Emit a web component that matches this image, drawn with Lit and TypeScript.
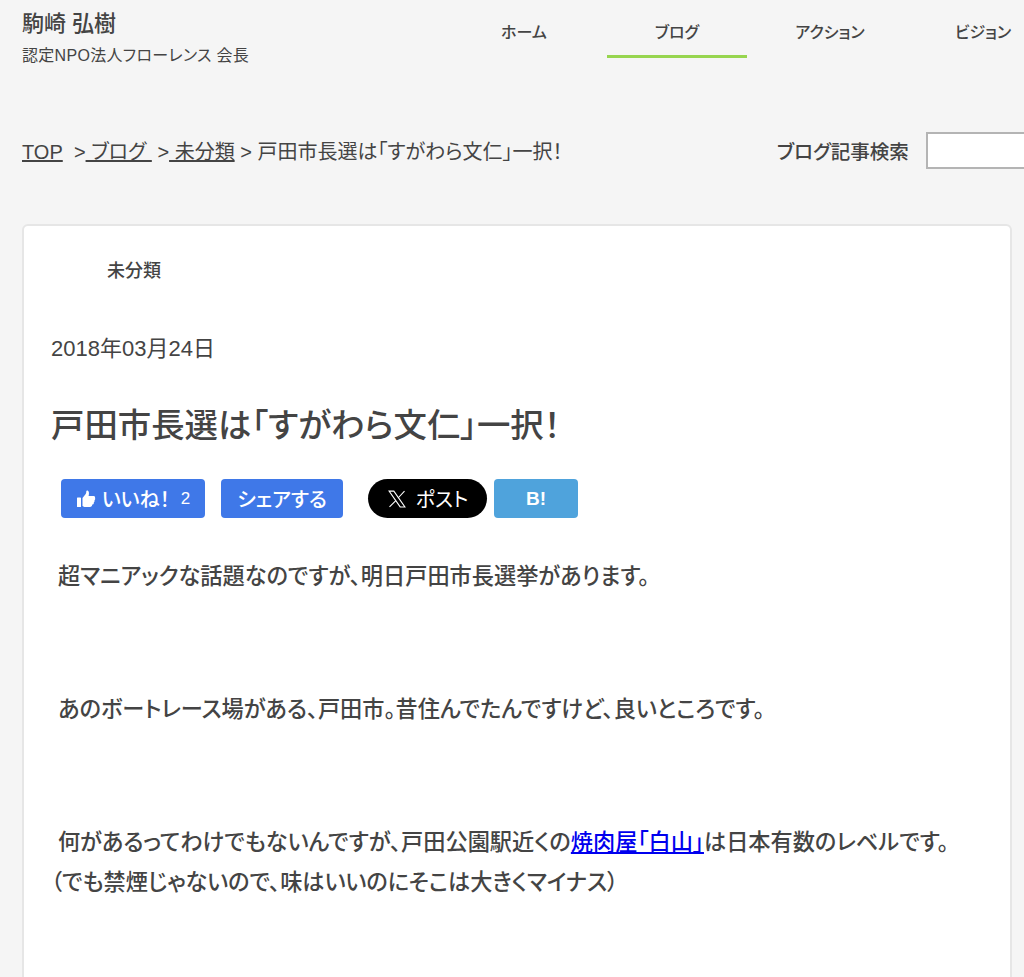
import { LitElement, html, css } from "lit";
import { customElement } from "lit/decorators.js";

@customElement("app-root")
export class AppRoot extends LitElement {
  static styles = css`
    :host {
      display: block;
      width: 1024px;
      height: 977px;
      overflow: hidden;
      background: #f5f5f5;
      color: #444;
      font-family: "Liberation Sans", "Noto Sans CJK JP", sans-serif;
      font-feature-settings: "palt";
    }
    a { color: inherit; }
    .header { display: flex; height: 58px; padding-left: 22px; }
    .brand { width: 432px; flex: none; }
    .name { font-size: 22px; font-weight: 500; line-height: 26px; margin-top: 11px; }
    .role { font-size: 16px; letter-spacing: 0.3px; line-height: 20px; margin-top: 9px; }
    .nav { display: flex; gap: 13px; flex: none; }
    .nav-item {
      width: 140px; height: 58px; box-sizing: border-box; padding-top: 23px;
      text-align: center; font-size: 16px; font-weight: 500; line-height: 20px;
    }
    .nav-item.active { border-bottom: 3px solid #97d54f; }
    .crumbs {
      display: flex; align-items: center; height: 40px; margin-top: 72px;
      padding-left: 22px; font-size: 20px; white-space: nowrap;
    }
    .path { width: 755px; flex: none; }
    .search { display: flex; align-items: center; gap: 17px; font-weight: 500; font-size: 19.5px; }
    .search-box {
      width: 140px; height: 37px; box-sizing: border-box; background: #fff;
      border: 2px solid #b4b4b4; flex: none;
    }
    .card {
      margin: 54px 0 0 22px; width: 990px; height: 900px; box-sizing: border-box;
      background: #fff; border: 2px solid #e6e6e6; border-radius: 6px;
      padding: 0 27px;
    }
    .cat { font-size: 18px; font-weight: 500; line-height: 20px; margin: 35px 0 0 56px; }
    .date { font-size: 22px; line-height: 28px; margin-top: 54px; }
    h1 { font-size: 33.4px; font-weight: 500; line-height: 44px; margin: 41px 0 0; }
    .share { display: flex; height: 39px; margin: 31px 0 0 10px; }
    .btn {
      display: flex; align-items: center; justify-content: center; box-sizing: border-box;
      height: 39px; color: #fff; background: #3f78e8; border-radius: 4px;
      font-size: 20px; font-weight: 500; white-space: nowrap;
    }
    .like { width: 144px; gap: 6px; }
    .like .count { font-weight: 400; font-size: 17px; margin-left: 5px; }
    .fb { width: 122px; margin-left: 16px; }
    .x { width: 119px; margin-left: 25px; background: #000; border-radius: 20px; gap: 9px; font-weight: 400; }
    .hatena { width: 84px; margin-left: 7px; background: #4fa3dc; font-weight: 700; font-size: 19px; }
    .body { margin-top: 39px; font-size: 22.2px; font-weight: 500; line-height: 40px; }
    .body p { margin: 0 0 93px; text-indent: 7px; }
    .body p span { display: block; text-indent: 0; }
    .body a { color: #0000ee; }
  `;

  render() {
    return html`
      <div class="header">
        <div class="brand">
          <div class="name">駒崎 弘樹</div>
          <div class="role">認定NPO法人フローレンス 会長</div>
        </div>
        <nav class="nav">
          <div class="nav-item">ホーム</div>
          <div class="nav-item active">ブログ</div>
          <div class="nav-item">アクション</div>
          <div class="nav-item">ビジョン</div>
        </nav>
      </div>
      <div class="crumbs">
        <div class="path">
          <a href="#">TOP</a>&nbsp; &gt;<a href="#">&nbsp;ブログ&nbsp;</a> &gt;<a href="#">&nbsp;未分類</a>&nbsp;&gt; 戸田市長選は「すがわら文仁」一択！
        </div>
        <div class="search">
          <span>ブログ記事検索</span>
          <div class="search-box"></div>
        </div>
      </div>
      <main class="card">
        <div class="cat">未分類</div>
        <div class="date">2018年03月24日</div>
        <h1>戸田市長選は「すがわら文仁」一択！</h1>
        <div class="share">
          <div class="btn like">
            <svg width="20" height="18" viewBox="0 0 20 18" fill="#fff">
              <rect x="1" y="7.5" width="4" height="9.5" rx="0.6"></rect>
              <path d="M6.5 8 L9.7 4 C10.3 3 10.3 2 10.3 1.2 C10.3 .5 11 .2 11.6 .5 C13 1.1 13.3 3 12.6 6 L17.6 6 C19 6 19.4 7.2 19 8 C19.4 8.8 19.2 9.8 18.5 10.2 C18.8 11.2 18.4 12 17.8 12.4 C18 13.6 17.4 14.6 16.2 14.6 L16.2 14.6 C16.2 16 15.4 17 14 17 L9.5 17 C8 17 7.2 16.4 6.5 16 Z"></path>
            </svg>
            <span>いいね！</span><span class="count">2</span>
          </div>
          <div class="btn fb">シェアする</div>
          <div class="btn x">
            <svg width="20" height="20" viewBox="0 0 24 24" fill="none" stroke="#fff" stroke-width="1.3">
              <path d="M2.5 2.5 H8.2 L21.5 21.5 H15.8 Z"></path>
              <path d="M21 2.5 L13.3 10.8 M10.6 13.9 L3 21.5"></path>
            </svg>
            <span>ポスト</span>
          </div>
          <div class="btn hatena">B!</div>
        </div>
        <div class="body">
          <p>超マニアックな話題なのですが、明日戸田市長選挙があります。</p>
          <p>あのボートレース場がある、戸田市。昔住んでたんですけど、良いところです。</p>
          <p>何があるってわけでもないんですが、戸田公園駅近くの<a href="#">焼肉屋「白山」</a>は日本有数のレベルです。<span>（でも禁煙じゃないので、味はいいのにそこは大きくマイナス）</span></p>
        </div>
      </main>
    `;
  }
}
